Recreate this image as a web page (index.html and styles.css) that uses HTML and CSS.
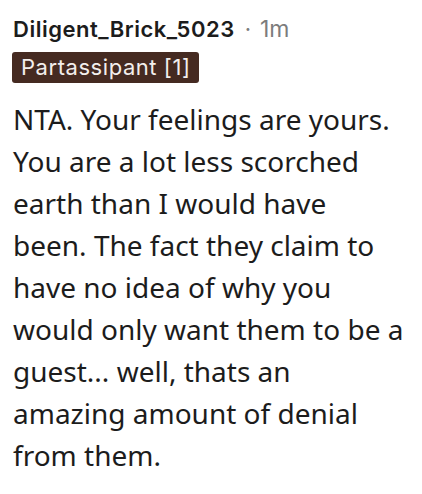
FILE: index.html
```html
<!DOCTYPE html>
<html>
<head>
<meta charset="utf-8">
<link rel="stylesheet" href="styles.css">
</head>
<body>
<div class="comment">
  <div class="meta">
    <span class="author">Diligent_Brick_5023</span>
    <span class="dot">·</span>
    <span class="time">1m</span>
  </div>
  <div class="flair">Partassipant [1]</div>
  <p class="text">NTA. Your feelings are yours. You are a lot less scorched earth than I would have been. The fact they claim to have no idea of why you would only want them to be a guest... well, thats an amazing amount of denial from them.</p>
</div>
</body>
</html>
```
FILE: styles.css
```css
html, body {
  margin: 0;
  padding: 0;
  background: #ffffff;
}
.comment {
  padding: 14px 0 0 13px;
  width: 392px;
}
.meta {
  display: flex;
  align-items: baseline;
  font-family: Inter, "Liberation Sans", sans-serif;
  font-size: 22px;
  line-height: 30px;
}
.author {
  font-weight: 600;
  color: #1c1c1c;
  letter-spacing: 0.5px;
}
.dot {
  color: #7c7c7c;
  margin: 0 9px 0 10px;
}
.time {
  color: #7c7c7c;
  font-size: 23px;
}
.flair {
  display: block;
  width: fit-content;
  margin: 8px 0 0 -1px;
  background: #452a21;
  color: #f3eeec;
  font-family: Inter, "Liberation Sans", sans-serif;
  font-size: 22px;
  line-height: 31px;
  padding: 0 9px 0 9px;
  border-radius: 3px;
  letter-spacing: 0.55px;
}
.text {
  margin: 15px 0 0;
  font-family: "Noto Sans", sans-serif;
  font-size: 28px;
  line-height: 42px;
  color: #1c1c1c;
}
```
